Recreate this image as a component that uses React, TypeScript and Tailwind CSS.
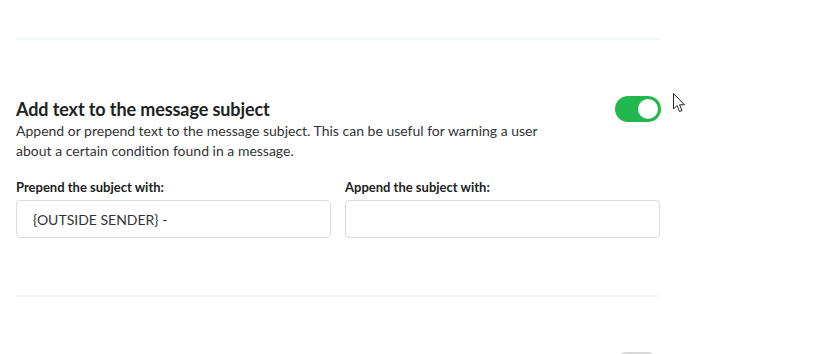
import { useState } from "react";

function Toggle({ on, onChange }: { on: boolean; onChange: () => void }) {
  return (
    <button
      onClick={onChange}
      className={`relative h-[26px] w-[46px] shrink-0 rounded-full transition-colors ${
        on ? "bg-[#22b84d]" : "bg-[#d9d9d9]"
      }`}
    >
      <span
        className={`absolute top-[3px] h-5 w-5 rounded-full bg-white transition-all ${
          on ? "left-[23px]" : "left-[3px]"
        }`}
      />
    </button>
  );
}

function Cursor() {
  return (
    <svg width="13" height="20" viewBox="0 0 13 20" className="absolute left-[673px] top-[93px]">
      <path
        d="M0.5 0.5 L0.5 16 L4 12.5 L6.5 18.5 L9 17.5 L6.5 11.8 L11.5 11.8 Z"
        fill="#fff"
        stroke="#222"
        strokeWidth="1"
        strokeLinejoin="round"
      />
    </svg>
  );
}

export default function App() {
  const [subjectOn, setSubjectOn] = useState(true);
  const [nextOn, setNextOn] = useState(false);
  const [prepend, setPrepend] = useState("{OUTSIDE SENDER} -");
  const [append, setAppend] = useState("");

  return (
    <main
      className="relative h-[354px] w-[821px] overflow-hidden bg-white text-[#333]"
      style={{ fontFamily: "Lato, 'Open Sans', sans-serif" }}
    >
      <div className="w-[644px] ml-4 pt-[38px]">
        {/* divider */}
        <div className="h-[2px] bg-[#f2f6f6]" />

        {/* Subject section */}
        <section className="pt-[57px]">
          <div className="flex items-start justify-between">
            <div>
              <h2 className="text-[18px] leading-[24px] font-bold tracking-[-0.1px] text-[#222]">
                Add text to the message subject
              </h2>
              <p className="max-w-[530px] text-[14px] leading-5 text-[#333]">
                Append or prepend text to the message subject. This can be useful for warning a user about a
                certain condition found in a message.
              </p>
            </div>
            <div className="-mt-[1px] -mr-px">
              <Toggle on={subjectOn} onChange={() => setSubjectOn(!subjectOn)} />
            </div>
          </div>

          <div className="mt-[17px] grid grid-cols-2 gap-[14px]">
            <label className="flex flex-col">
              <span className="mb-[4px] text-[13px] leading-[18px] font-bold text-[#222]">
                Prepend the subject with:
              </span>
              <input
                value={prepend}
                onChange={(e) => setPrepend(e.target.value)}
                className="h-[38px] rounded-[4px] border border-[#dcdcdc] bg-white px-4 text-[14px] text-[#333] outline-none"
              />
            </label>
            <label className="flex flex-col">
              <span className="mb-[4px] text-[13px] leading-[18px] font-bold text-[#222]">
                Append the subject with:
              </span>
              <input
                value={append}
                onChange={(e) => setAppend(e.target.value)}
                className="h-[38px] rounded-[4px] border border-[#dcdcdc] bg-white px-4 text-[14px] text-[#333] outline-none"
              />
            </label>
          </div>
        </section>

        <div className="mt-[57px] h-[2px] bg-[#f2f6f6]" />

        {/* next section, cut off */}
        <section className="pt-[55px] flex justify-end">
          <Toggle on={nextOn} onChange={() => setNextOn(!nextOn)} />
        </section>
      </div>

      <Cursor />
    </main>
  );
}
